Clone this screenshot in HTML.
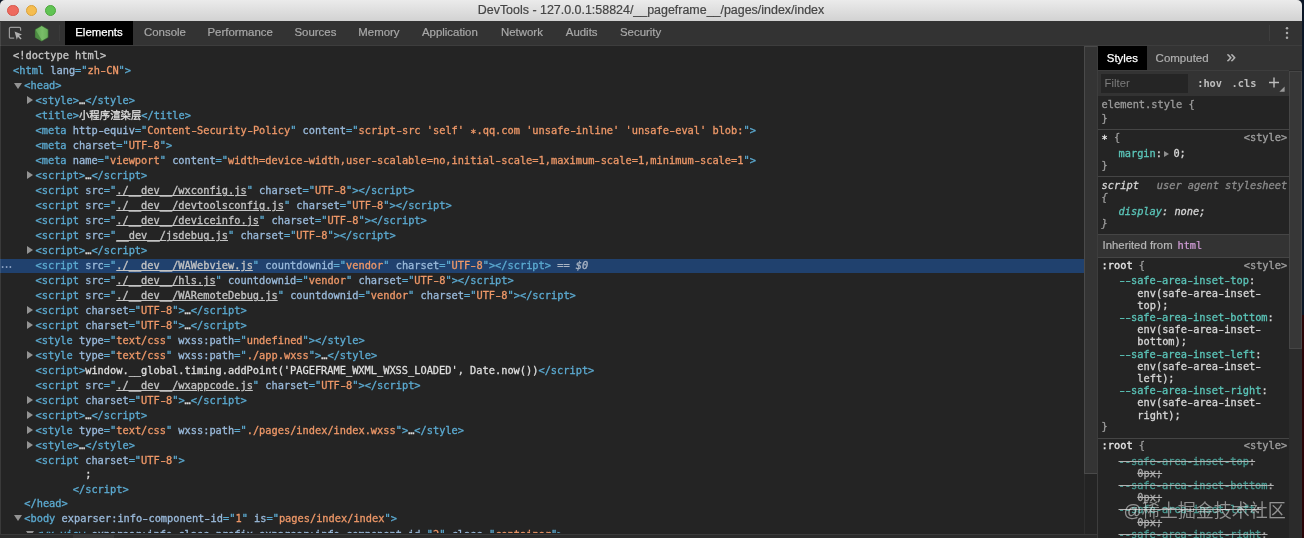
<!DOCTYPE html>
<html lang="zh-CN"><head><meta charset="utf-8"><title>DevTools</title>
<style>
html,body{margin:0;padding:0}
body{width:1304px;height:538px;overflow:hidden;position:relative;background:#0b1626;font-family:"Liberation Sans","Noto Sans CJK SC",sans-serif}
#win{position:absolute;left:0;top:0;width:1302px;height:538px;overflow:hidden;border-radius:5px 5px 0 0;will-change:transform}
#bg{position:absolute;left:0;top:0;width:1302px;height:538px;background:#242424;border-radius:5px 5px 0 0}
#desk{position:absolute;left:1302px;top:315px;width:2px;height:223px;background:#2a0508}
#title{position:absolute;left:0;top:0;width:100%;height:20.5px;background:linear-gradient(#ebebeb,#d2d2d2);border-bottom:1px solid #222}
#title .txt{position:absolute;left:0;right:0;top:3.3px;text-align:center;-webkit-text-stroke:0.2px;font-size:12.45px;line-height:15px;color:#454545;white-space:pre}
.tl{position:absolute;top:4.6px;width:11.3px;height:11.3px;border-radius:50%;box-sizing:border-box}
#bar{position:absolute;left:0;top:21px;width:100%;height:24px;background:#333;border-bottom:1px solid #3d3d3d;box-sizing:content-box}
.tab{position:absolute;top:-0.6px;height:24px;line-height:24.6px;-webkit-text-stroke:0.2px;font-size:11.42px;color:#a8a8a8;white-space:pre}
#seltab{position:absolute;left:65px;top:0;width:68px;height:24px;background:#000;color:#fff;text-align:center;line-height:23.4px;font-size:11.4px;-webkit-text-stroke:0.25px}
#tree{position:absolute;left:0;top:46px;width:1084px;height:487px;overflow:hidden}
#tree .in{position:absolute;left:0;top:-46px;width:1084px;height:560px}
.ln{position:absolute;white-space:pre;font-family:"DejaVu Sans Mono","Liberation Mono",monospace;font-size:10.322px;line-height:12px;height:12px;color:#d0d0d0;-webkit-text-stroke:0.3px}
.cj{font-family:"Noto Sans CJK SC","DejaVu Sans Mono",sans-serif;font-size:10.4px}
.t{color:#5cabd2}.n{color:#9bbbdc}.v{color:#ee9868}.l{color:#c4c4c4;text-decoration:underline}.x{color:#dedede}.d{color:#c8c8c8}
.eq{color:#a9b4c4}
.tr{position:absolute;width:0;height:0;border-left:6px solid #939393;border-top:4px solid transparent;border-bottom:4px solid transparent}
.td{position:absolute;width:0;height:0;border-top:6px solid #939393;border-left:4px solid transparent;border-right:4px solid transparent}
#sel{position:absolute;left:0;top:258.6px;width:1084px;height:14.3px;background:#20416e}
#dots{position:absolute;left:1.6px;top:262.4px;font-size:6.4px;line-height:9px;color:#8da3c4;letter-spacing:1.65px}
#vs{position:absolute;left:1084px;top:46px;width:14px;height:487.5px;background:#242424;border-left:1px solid #2f2f2f;border-right:1px solid #3d3d3d;box-sizing:border-box}
#vs i{position:absolute;left:-1px;top:-0.5px;width:14px;height:428px;background:#343434;border:1px solid #4a4a4a;box-sizing:border-box}
#hs{position:absolute;left:0;top:533.5px;width:1097px;height:4.5px;background:#2b2b2b;border-top:1px solid #3a3a3a;box-sizing:border-box}
#hs i{position:absolute;left:73px;top:0;width:41px;height:5px;background:#373737}
#side{position:absolute;left:1097px;top:46px;width:205px;height:492px;background:#242424;border-left:1px solid #3d3d3d;box-sizing:border-box}
#stabs{position:absolute;left:1098px;top:46px;width:204px;height:24px;background:#333}
#stabs .on{position:absolute;left:0;top:0;width:48.7px;height:24px;background:#000;color:#fff;font-size:11.4px;line-height:24.6px;text-align:center;-webkit-text-stroke:0.25px}
#stabs .off{position:absolute;left:57.6px;top:0;font-size:11.5px;line-height:24.6px;color:#b0b0b0;-webkit-text-stroke:0.2px}
#stabs .more{position:absolute;left:128.6px;top:-0.7px;font-size:17px;line-height:24px;color:#b8b8b8;-webkit-text-stroke:0.3px}
#ftb{position:absolute;left:1098px;top:70px;width:191px;height:25.5px;background:#333;border-top:1px solid #3d3d3d;box-sizing:border-box}
#ftb .inp{position:absolute;left:2.6px;top:2.7px;width:87px;height:19px;background:#252525}
#ftb .ph{position:absolute;left:6.6px;top:0;font-size:11.3px;line-height:25px;color:#7d7d7d}
#ftb .b{position:absolute;top:6.2px;font-family:"DejaVu Sans Mono","Liberation Mono",monospace;font-weight:bold;font-size:10.322px;line-height:12px;color:#bdbdbd;white-space:pre}
#ssb{position:absolute;left:1289px;top:70px;width:13px;height:468px;background:#2b2b2b}
#ssb i{position:absolute;left:0;top:1px;width:13px;height:278px;background:#373737;border:1px solid #464646;box-sizing:border-box}
.sep{position:absolute;left:1098px;width:191px;height:1px}
.inh{position:absolute;left:1098px;width:191px;background:#333}
.inht{position:absolute;font-size:11.35px;line-height:14px;color:#b8b8b8;white-space:pre;-webkit-text-stroke:0.2px}
.hm{margin-left:1.7px;font-family:"DejaVu Sans Mono","Liberation Mono",monospace;font-size:10.322px;color:#d59fdb}
.p{color:#5bc5b9}.w{color:#d6d6d6}.g{color:#9c9c9c}.ws{color:#e8e8e8}.src{color:#a0a0a0}.ua{color:#8c8c8c}
.it{font-style:italic}
.as{position:relative;top:2.2px}
.h{display:inline-block;font-weight:inherit;transform:scaleX(1.5)}
.so{text-decoration:line-through;text-decoration-color:#b4b4b4;text-decoration-thickness:1px}
.so .p{color:#4a9d94}.so .w{color:#a8a8a8}
.trs{display:inline-block;width:0;height:0;border-left:5.6px solid #8e8e8e;border-top:3.7px solid transparent;border-bottom:3.7px solid transparent;margin:0 -2px 0 2.2px;vertical-align:-0.5px}
#wm{position:absolute;left:1123.5px;top:499.6px;font-family:"Liberation Sans","Noto Sans CJK SC",sans-serif;font-weight:350;font-size:18px;line-height:22px;color:rgba(255,255,255,0.5);white-space:pre;letter-spacing:0px}
</style></head><body>
<div id="bg"></div>
<div id="win">
<div id="title"><i class="tl" style="left:7.3px;background:#ee6a5e;border:0.5px solid #d5574b"></i><i class="tl" style="left:26.1px;background:#f5bd4f;border:0.5px solid #d9a03a"></i><i class="tl" style="left:44.7px;background:#61c454;border:0.5px solid #4ea73e"></i><div class="txt">DevTools - 127.0.0.1:58824/__pageframe__/pages/index/index</div></div>
<div id="bar">
<svg style="position:absolute;left:8px;top:4px" width="16" height="16" viewBox="0 0 16 16"><path d="M6.2 13.2H2.6a1.2 1.2 0 0 1-1.2-1.2V3.6a1.2 1.2 0 0 1 1.2-1.2h8.8a1.2 1.2 0 0 1 1.2 1.2v2.2" fill="none" stroke="#9a9a9a" stroke-width="1.2"/><path d="M6.6 6.6l7.4 3-3 1.1 2.6 2.7-1 1-2.7-2.7-1.1 3z" fill="#b0b0b0"/></svg>
<svg style="position:absolute;left:34.3px;top:3.75px" width="15.4" height="16.85" viewBox="0 0 16 17.5"><defs><linearGradient id="ng" x1="0" y1="0" x2="1" y2="0"><stop offset="0" stop-color="#62a955"/><stop offset=".55" stop-color="#79bd68"/><stop offset="1" stop-color="#68ad59"/></linearGradient></defs><path d="M8 .7l6.7 3.85v8.4L8 16.8l-6.7-3.85v-8.4z" fill="url(#ng)" stroke="#35632f" stroke-width=".6"/><path d="M1.5 4.8L8.4 16.4 8 16.6l-6.5-3.75z" fill="#47843f" opacity=".8"/></svg>
<i style="position:absolute;left:58.5px;top:4px;width:1px;height:16px;background:#3a3a3a"></i>
<div id="seltab">Elements</div><span class="tab" style="left:144px">Console</span><span class="tab" style="left:207.5px">Performance</span><span class="tab" style="left:294.5px">Sources</span><span class="tab" style="left:358.3px">Memory</span><span class="tab" style="left:422px">Application</span><span class="tab" style="left:501px">Network</span><span class="tab" style="left:565.8px">Audits</span><span class="tab" style="left:620px">Security</span>
<i style="position:absolute;left:1269px;top:4px;width:1px;height:16px;background:#3e3e3e"></i>
<svg style="position:absolute;left:1284px;top:5px" width="6" height="14" viewBox="0 0 6 14"><circle cx="3" cy="2.2" r="1.25" fill="#aaa"/><circle cx="3" cy="7" r="1.25" fill="#aaa"/><circle cx="3" cy="11.8" r="1.25" fill="#aaa"/></svg>
</div>
<div id="tree"><div class="in">
<div id="sel"></div><div id="dots">•••</div>
<div class="ln" style="left:13.00px;top:49.40px"><span class="d">&lt;!doctype html&gt;</span></div>
<div class="ln" style="left:13.00px;top:64.40px"><span class="t">&lt;html</span> <span class="n">lang</span><span class="t">="</span><span class="v">zh<b class="h">-</b>CN</span><span class="t">"</span><span class="t">&gt;</span></div>
<i class="td" style="left:14.35px;top:82.70px"></i>
<div class="ln" style="left:24.25px;top:79.40px"><span class="t">&lt;head</span><span class="t">&gt;</span></div>
<i class="tr" style="left:26.80px;top:96.20px"></i>
<div class="ln" style="left:35.50px;top:94.40px"><span class="t">&lt;style</span><span class="t">&gt;</span><span class="x">…</span><span class="t">&lt;/style&gt;</span></div>
<div class="ln" style="left:35.50px;top:109.40px"><span class="t">&lt;title</span><span class="t">&gt;</span><span class="x cj">小程序渲染层</span><span class="t">&lt;/title&gt;</span></div>
<div class="ln" style="left:35.50px;top:124.40px"><span class="t">&lt;meta</span> <span class="n">http<b class="h">-</b>equiv</span><span class="t">="</span><span class="v">Content<b class="h">-</b>Security<b class="h">-</b>Policy</span><span class="t">"</span> <span class="n">content</span><span class="t">="</span><span class="v">script<b class="h">-</b>src 'self' <span class="as">*</span>.qq.com 'unsafe<b class="h">-</b>inline' 'unsafe<b class="h">-</b>eval' blob:</span><span class="t">"</span><span class="t">&gt;</span></div>
<div class="ln" style="left:35.50px;top:139.40px"><span class="t">&lt;meta</span> <span class="n">charset</span><span class="t">="</span><span class="v">UTF<b class="h">-</b>8</span><span class="t">"</span><span class="t">&gt;</span></div>
<div class="ln" style="left:35.50px;top:154.40px"><span class="t">&lt;meta</span> <span class="n">name</span><span class="t">="</span><span class="v">viewport</span><span class="t">"</span> <span class="n">content</span><span class="t">="</span><span class="v">width=device<b class="h">-</b>width,user<b class="h">-</b>scalable=no,initial<b class="h">-</b>scale=1,maximum<b class="h">-</b>scale=1,minimum<b class="h">-</b>scale=1</span><span class="t">"</span><span class="t">&gt;</span></div>
<i class="tr" style="left:26.80px;top:171.20px"></i>
<div class="ln" style="left:35.50px;top:169.40px"><span class="t">&lt;script</span><span class="t">&gt;</span><span class="x">…</span><span class="t">&lt;/script&gt;</span></div>
<div class="ln" style="left:35.50px;top:184.40px"><span class="t">&lt;script</span> <span class="n">src</span><span class="t">="</span><span class="l">./__dev__/wxconfig.js</span><span class="t">"</span> <span class="n">charset</span><span class="t">="</span><span class="v">UTF<b class="h">-</b>8</span><span class="t">"</span><span class="t">&gt;</span><span class="t">&lt;/script&gt;</span></div>
<div class="ln" style="left:35.50px;top:199.40px"><span class="t">&lt;script</span> <span class="n">src</span><span class="t">="</span><span class="l">./__dev__/devtoolsconfig.js</span><span class="t">"</span> <span class="n">charset</span><span class="t">="</span><span class="v">UTF<b class="h">-</b>8</span><span class="t">"</span><span class="t">&gt;</span><span class="t">&lt;/script&gt;</span></div>
<div class="ln" style="left:35.50px;top:214.40px"><span class="t">&lt;script</span> <span class="n">src</span><span class="t">="</span><span class="l">./__dev__/deviceinfo.js</span><span class="t">"</span> <span class="n">charset</span><span class="t">="</span><span class="v">UTF<b class="h">-</b>8</span><span class="t">"</span><span class="t">&gt;</span><span class="t">&lt;/script&gt;</span></div>
<div class="ln" style="left:35.50px;top:229.40px"><span class="t">&lt;script</span> <span class="n">src</span><span class="t">="</span><span class="l">__dev__/jsdebug.js</span><span class="t">"</span> <span class="n">charset</span><span class="t">="</span><span class="v">UTF<b class="h">-</b>8</span><span class="t">"</span><span class="t">&gt;</span><span class="t">&lt;/script&gt;</span></div>
<i class="tr" style="left:26.80px;top:246.20px"></i>
<div class="ln" style="left:35.50px;top:244.40px"><span class="t">&lt;script</span><span class="t">&gt;</span><span class="x">…</span><span class="t">&lt;/script&gt;</span></div>
<div class="ln" style="left:35.50px;top:259.40px"><span class="t">&lt;script</span> <span class="n">src</span><span class="t">="</span><span class="l">./__dev__/WAWebview.js</span><span class="t">"</span> <span class="n">countdownid</span><span class="t">="</span><span class="v">vendor</span><span class="t">"</span> <span class="n">charset</span><span class="t">="</span><span class="v">UTF<b class="h">-</b>8</span><span class="t">"</span><span class="t">&gt;</span><span class="t">&lt;/script&gt;</span><span class="eq"> == <i>$0</i></span></div>
<div class="ln" style="left:35.50px;top:274.40px"><span class="t">&lt;script</span> <span class="n">src</span><span class="t">="</span><span class="l">./__dev__/hls.js</span><span class="t">"</span> <span class="n">countdownid</span><span class="t">="</span><span class="v">vendor</span><span class="t">"</span> <span class="n">charset</span><span class="t">="</span><span class="v">UTF<b class="h">-</b>8</span><span class="t">"</span><span class="t">&gt;</span><span class="t">&lt;/script&gt;</span></div>
<div class="ln" style="left:35.50px;top:289.40px"><span class="t">&lt;script</span> <span class="n">src</span><span class="t">="</span><span class="l">./__dev__/WARemoteDebug.js</span><span class="t">"</span> <span class="n">countdownid</span><span class="t">="</span><span class="v">vendor</span><span class="t">"</span> <span class="n">charset</span><span class="t">="</span><span class="v">UTF<b class="h">-</b>8</span><span class="t">"</span><span class="t">&gt;</span><span class="t">&lt;/script&gt;</span></div>
<i class="tr" style="left:26.80px;top:306.20px"></i>
<div class="ln" style="left:35.50px;top:304.40px"><span class="t">&lt;script</span> <span class="n">charset</span><span class="t">="</span><span class="v">UTF<b class="h">-</b>8</span><span class="t">"</span><span class="t">&gt;</span><span class="x">…</span><span class="t">&lt;/script&gt;</span></div>
<i class="tr" style="left:26.80px;top:321.20px"></i>
<div class="ln" style="left:35.50px;top:319.40px"><span class="t">&lt;script</span> <span class="n">charset</span><span class="t">="</span><span class="v">UTF<b class="h">-</b>8</span><span class="t">"</span><span class="t">&gt;</span><span class="x">…</span><span class="t">&lt;/script&gt;</span></div>
<div class="ln" style="left:35.50px;top:334.40px"><span class="t">&lt;style</span> <span class="n">type</span><span class="t">="</span><span class="v">text/css</span><span class="t">"</span> <span class="n">wxss:path</span><span class="t">="</span><span class="v">undefined</span><span class="t">"</span><span class="t">&gt;</span><span class="t">&lt;/style&gt;</span></div>
<i class="tr" style="left:26.80px;top:351.20px"></i>
<div class="ln" style="left:35.50px;top:349.40px"><span class="t">&lt;style</span> <span class="n">type</span><span class="t">="</span><span class="v">text/css</span><span class="t">"</span> <span class="n">wxss:path</span><span class="t">="</span><span class="v">./app.wxss</span><span class="t">"</span><span class="t">&gt;</span><span class="x">…</span><span class="t">&lt;/style&gt;</span></div>
<div class="ln" style="left:35.50px;top:364.40px"><span class="t">&lt;script</span><span class="t">&gt;</span><span class="x">window.__global.timing.addPoint('PAGEFRAME_WXML_WXSS_LOADED', Date.now())</span><span class="t">&lt;/script&gt;</span></div>
<div class="ln" style="left:35.50px;top:379.40px"><span class="t">&lt;script</span> <span class="n">src</span><span class="t">="</span><span class="l">./__dev__/wxappcode.js</span><span class="t">"</span> <span class="n">charset</span><span class="t">="</span><span class="v">UTF<b class="h">-</b>8</span><span class="t">"</span><span class="t">&gt;</span><span class="t">&lt;/script&gt;</span></div>
<i class="tr" style="left:26.80px;top:396.20px"></i>
<div class="ln" style="left:35.50px;top:394.40px"><span class="t">&lt;script</span> <span class="n">charset</span><span class="t">="</span><span class="v">UTF<b class="h">-</b>8</span><span class="t">"</span><span class="t">&gt;</span><span class="x">…</span><span class="t">&lt;/script&gt;</span></div>
<i class="tr" style="left:26.80px;top:411.20px"></i>
<div class="ln" style="left:35.50px;top:409.40px"><span class="t">&lt;script</span><span class="t">&gt;</span><span class="x">…</span><span class="t">&lt;/script&gt;</span></div>
<i class="tr" style="left:26.80px;top:426.20px"></i>
<div class="ln" style="left:35.50px;top:424.40px"><span class="t">&lt;style</span> <span class="n">type</span><span class="t">="</span><span class="v">text/css</span><span class="t">"</span> <span class="n">wxss:path</span><span class="t">="</span><span class="v">./pages/index/index.wxss</span><span class="t">"</span><span class="t">&gt;</span><span class="x">…</span><span class="t">&lt;/style&gt;</span></div>
<i class="tr" style="left:26.80px;top:441.20px"></i>
<div class="ln" style="left:35.50px;top:439.40px"><span class="t">&lt;style</span><span class="t">&gt;</span><span class="x">…</span><span class="t">&lt;/style&gt;</span></div>
<div class="ln" style="left:35.50px;top:454.40px"><span class="t">&lt;script</span> <span class="n">charset</span><span class="t">="</span><span class="v">UTF<b class="h">-</b>8</span><span class="t">"</span><span class="t">&gt;</span></div>
<div class="ln" style="left:35.50px;top:468.40px"><span class="x">        ;</span></div>
<div class="ln" style="left:35.50px;top:482.60px"><span class="x">      </span><span class="t">&lt;/script&gt;</span></div>
<div class="ln" style="left:24.25px;top:497.20px"><span class="t">&lt;/head&gt;</span></div>
<i class="td" style="left:14.35px;top:515.40px"></i>
<div class="ln" style="left:24.25px;top:512.10px"><span class="t">&lt;body</span> <span class="n">exparser:info<b class="h">-</b>component<b class="h">-</b>id</span><span class="t">="</span><span class="v">1</span><span class="t">"</span> <span class="n">is</span><span class="t">="</span><span class="v">pages/index/index</span><span class="t">"</span><span class="t">&gt;</span></div>
<i class="td" style="left:25.60px;top:530.80px"></i>
<div class="ln" style="left:35.50px;top:527.50px"><span class="t">&lt;wx<b class="h">-</b>view</span> <span class="n">exparser:info<b class="h">-</b>class<b class="h">-</b>prefix</span> <span class="n">exparser:info<b class="h">-</b>component<b class="h">-</b>id</span><span class="t">="</span><span class="v">2</span><span class="t">"</span> <span class="n">class</span><span class="t">="</span><span class="v">container</span><span class="t">"</span><span class="t">&gt;</span></div>
</div></div>
<i style="position:absolute;left:0;top:21.5px;width:1px;height:517px;background:rgba(255,255,255,0.1)"></i>
<div id="vs"><i></i></div>
<div id="hs"><i></i></div>
<div id="side"></div>
<div id="stabs"><div class="on">Styles</div><div class="off">Computed</div><div class="more">»</div></div>
<div id="ftb"><div class="inp"></div><div class="ph">Filter</div><span class="b" style="left:99.2px">:hov</span><span class="b" style="left:133.6px">.cls</span>
<svg style="position:absolute;left:170px;top:5px" width="20" height="18" viewBox="0 0 20 18"><path d="M1 6.5h10M6 1.5v10" stroke="#bdbdbd" stroke-width="1.4" fill="none"/><path d="M16.6 10.5v5.2h-5.2z" fill="#9a9a9a"/></svg>
</div>
<div class="ln " style="left:1101.60px;top:98.00px"><span class="g">element.style {</span></div>
<div class="ln " style="left:1101.60px;top:112.40px"><span class="g">}</span></div>
<div class="sep" style="top:129px;background:#454545"></div>
<div class="ln " style="left:1101.60px;top:131.20px"><span class="ws as">*</span><span class="g"> {</span></div>
<div class="ln " style="right:14.80px;top:131.20px"><span class="src">&lt;style&gt;</span></div>
<div class="ln " style="left:1118.50px;top:146.60px"><span class="p">margin</span><span class="w">:</span><i class="trs"></i><span class="w"> 0;</span></div>
<div class="ln " style="left:1101.60px;top:158.80px"><span class="g">}</span></div>
<div class="sep" style="top:176px;background:#454545"></div>
<div class="ln it" style="left:1101.60px;top:178.80px"><span class="w">script</span></div>
<div class="ln it" style="right:14.80px;top:178.80px"><span class="ua">user agent stylesheet</span></div>
<div class="ln it" style="left:1101.60px;top:191.40px"><span class="g">{</span></div>
<div class="ln it" style="left:1118.50px;top:204.60px"><span class="p">display</span><span class="w">: none;</span></div>
<div class="ln it" style="left:1101.60px;top:216.70px"><span class="g">}</span></div>
<div class="sep" style="top:234px;background:#454545"></div>
<div class="inh" style="top:235px;height:22px"></div>
<div class="inht" style="left:1102.6px;top:238.3px">Inherited from <span class="hm">html</span></div>
<div class="sep" style="top:257px;background:#454545"></div>
<div class="ln " style="left:1101.60px;top:259.30px"><span class="ws">:root</span><span class="g"> {</span></div>
<div class="ln " style="right:14.80px;top:259.30px"><span class="src">&lt;style&gt;</span></div>
<div class="ln " style="left:1118.50px;top:274.30px"><span class="p"><b class="h">-</b><b class="h">-</b>safe<b class="h">-</b>area<b class="h">-</b>inset<b class="h">-</b>top</span><span class="w">:</span></div>
<div class="ln " style="left:1137.30px;top:286.50px"><span class="w">env(safe<b class="h">-</b>area<b class="h">-</b>inset<b class="h">-</b></span></div>
<div class="ln " style="left:1137.30px;top:298.70px"><span class="w">top);</span></div>
<div class="ln " style="left:1118.50px;top:310.90px"><span class="p"><b class="h">-</b><b class="h">-</b>safe<b class="h">-</b>area<b class="h">-</b>inset<b class="h">-</b>bottom</span><span class="w">:</span></div>
<div class="ln " style="left:1137.30px;top:323.10px"><span class="w">env(safe<b class="h">-</b>area<b class="h">-</b>inset<b class="h">-</b></span></div>
<div class="ln " style="left:1137.30px;top:335.30px"><span class="w">bottom);</span></div>
<div class="ln " style="left:1118.50px;top:347.50px"><span class="p"><b class="h">-</b><b class="h">-</b>safe<b class="h">-</b>area<b class="h">-</b>inset<b class="h">-</b>left</span><span class="w">:</span></div>
<div class="ln " style="left:1137.30px;top:359.70px"><span class="w">env(safe<b class="h">-</b>area<b class="h">-</b>inset<b class="h">-</b></span></div>
<div class="ln " style="left:1137.30px;top:371.90px"><span class="w">left);</span></div>
<div class="ln " style="left:1118.50px;top:384.10px"><span class="p"><b class="h">-</b><b class="h">-</b>safe<b class="h">-</b>area<b class="h">-</b>inset<b class="h">-</b>right</span><span class="w">:</span></div>
<div class="ln " style="left:1137.30px;top:396.30px"><span class="w">env(safe<b class="h">-</b>area<b class="h">-</b>inset<b class="h">-</b></span></div>
<div class="ln " style="left:1137.30px;top:408.50px"><span class="w">right);</span></div>
<div class="ln " style="left:1101.60px;top:420.40px"><span class="g">}</span></div>
<div class="sep" style="top:438px;background:#454545"></div>
<div class="ln " style="left:1101.60px;top:439.20px"><span class="ws">:root</span><span class="g"> {</span></div>
<div class="ln " style="right:14.80px;top:439.20px"><span class="src">&lt;style&gt;</span></div>
<div class="ln " style="left:1118.50px;top:454.60px"><span class="so"><span class="p">--safe-area-inset-top</span><span class="w">:</span></span></div>
<div class="ln " style="left:1137.30px;top:466.80px"><span class="so"><span class="w">0px;</span></span></div>
<div class="ln " style="left:1118.50px;top:479.00px"><span class="so"><span class="p">--safe-area-inset-bottom</span><span class="w">:</span></span></div>
<div class="ln " style="left:1137.30px;top:491.20px"><span class="so"><span class="w">0px;</span></span></div>
<div class="ln " style="left:1118.50px;top:503.40px"><span class="so"><span class="p">--safe-area-inset-left</span><span class="w">:</span></span></div>
<div class="ln " style="left:1137.30px;top:515.60px"><span class="so"><span class="w">0px;</span></span></div>
<div class="ln " style="left:1118.50px;top:527.80px"><span class="so"><span class="p">--safe-area-inset-right</span><span class="w">:</span></span></div>
<div class="ln " style="left:1137.30px;top:540.00px"><span class="so"><span class="w">0px;</span></span></div>
<div id="ssb"><i></i></div>
<div id="wm">@稀土掘金技术社区</div>
</div>
<div id="desk"></div>
</body></html>
